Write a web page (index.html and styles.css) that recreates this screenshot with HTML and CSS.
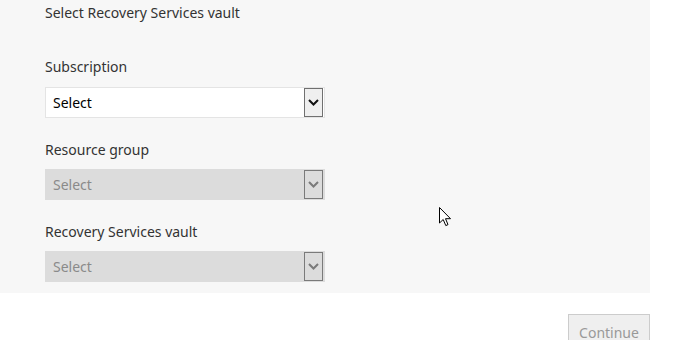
FILE: index.html
```html
<!DOCTYPE html>
<html lang="en">
<head>
  <meta charset="UTF-8">
  <title>Select Recovery Services vault</title>
  <link rel="stylesheet" href="styles.css">
</head>
<body>
  <div class="panel">
    <h1 class="title">Select Recovery Services vault</h1>

    <div class="field">
      <label>Subscription</label>
      <div class="select">
        <span class="value">Select</span>
        <span class="arrow">
          <svg width="11" height="7" viewBox="0 0 11 7"><path d="M1 1 L5.5 5.5 L10 1" fill="none" stroke="currentColor" stroke-width="2"/></svg>
        </span>
      </div>
    </div>

    <div class="field">
      <label>Resource group</label>
      <div class="select disabled">
        <span class="value">Select</span>
        <span class="arrow">
          <svg width="11" height="7" viewBox="0 0 11 7"><path d="M1 1 L5.5 5.5 L10 1" fill="none" stroke="currentColor" stroke-width="2"/></svg>
        </span>
      </div>
    </div>

    <div class="field">
      <label>Recovery Services vault</label>
      <div class="select disabled">
        <span class="value">Select</span>
        <span class="arrow">
          <svg width="11" height="7" viewBox="0 0 11 7"><path d="M1 1 L5.5 5.5 L10 1" fill="none" stroke="currentColor" stroke-width="2"/></svg>
        </span>
      </div>
    </div>
  </div>

  <div class="footer">
    <button class="continue" disabled>Continue</button>
  </div>

  <svg class="cursor" width="13" height="20" viewBox="0 0 13 20">
    <path d="M0.5 0.5 L0.5 16 L4.2 12.5 L6.8 18.6 L9 17.6 L6.5 11.7 L11.5 11.7 Z" fill="#fff" stroke="#000" stroke-width="1"/>
  </svg>
</body>
</html>
```

FILE: styles.css
```css
body {
  margin: 0;
  font-family: 'Noto Sans', 'Open Sans', sans-serif;
  background-color: #fff;
  color: #333;
  position: relative;
  width: 674px;
  height: 340px;
  overflow: hidden;
}
.panel {
  width: 605px;
  height: 293px;
  padding-left: 45px;
  background-color: #f7f7f7;
  box-sizing: content-box;
  overflow: hidden;
}
.title {
  margin: 0;
  padding-top: 3px;
  font-size: 14px;
  font-weight: normal;
  line-height: 20px;
  color: #333;
}
.field {
  display: flex;
  flex-direction: column;
}
.field:first-of-type {
  margin-top: 34px;
}
.field + .field {
  margin-top: 22px;
}
.field label {
  font-size: 14px;
  line-height: 20px;
  color: #333;
  margin-bottom: 9px;
}
.field:first-of-type label {
  margin-bottom: 10px;
}
.select {
  display: flex;
  align-items: center;
  justify-content: space-between;
  width: 280px;
  height: 31px;
  box-sizing: border-box;
  border: 1px solid #e4e4e4;
  background-color: #fff;
  padding: 0 1px 0 7px;
}
.select .value {
  font-size: 14px;
  color: #000;
}
.select .arrow {
  display: flex;
  align-items: center;
  justify-content: center;
  width: 19px;
  height: 29px;
  box-sizing: border-box;
  border: 1px solid #707070;
  background-color: #efefef;
  color: #111;
}
.select.disabled {
  background-color: #dcdcdc;
  border-color: #dcdcdc;
}
.select.disabled .value {
  color: #8a8a8a;
}
.select.disabled .arrow {
  background-color: #dcdcdc;
  border-color: #7a7a7a;
  color: #7a7a7a;
}
.footer {
  display: flex;
  justify-content: flex-end;
  width: 650px;
  padding-top: 21px;
}
.continue {
  width: 82px;
  height: 36px;
  border: 1px solid #cccccc;
  background-color: #efefef;
  color: #999;
  font-family: 'Noto Sans', 'Open Sans', sans-serif;
  font-size: 14px;
  padding: 0;
}
.cursor {
  position: absolute;
  left: 439px;
  top: 207px;
}
```
